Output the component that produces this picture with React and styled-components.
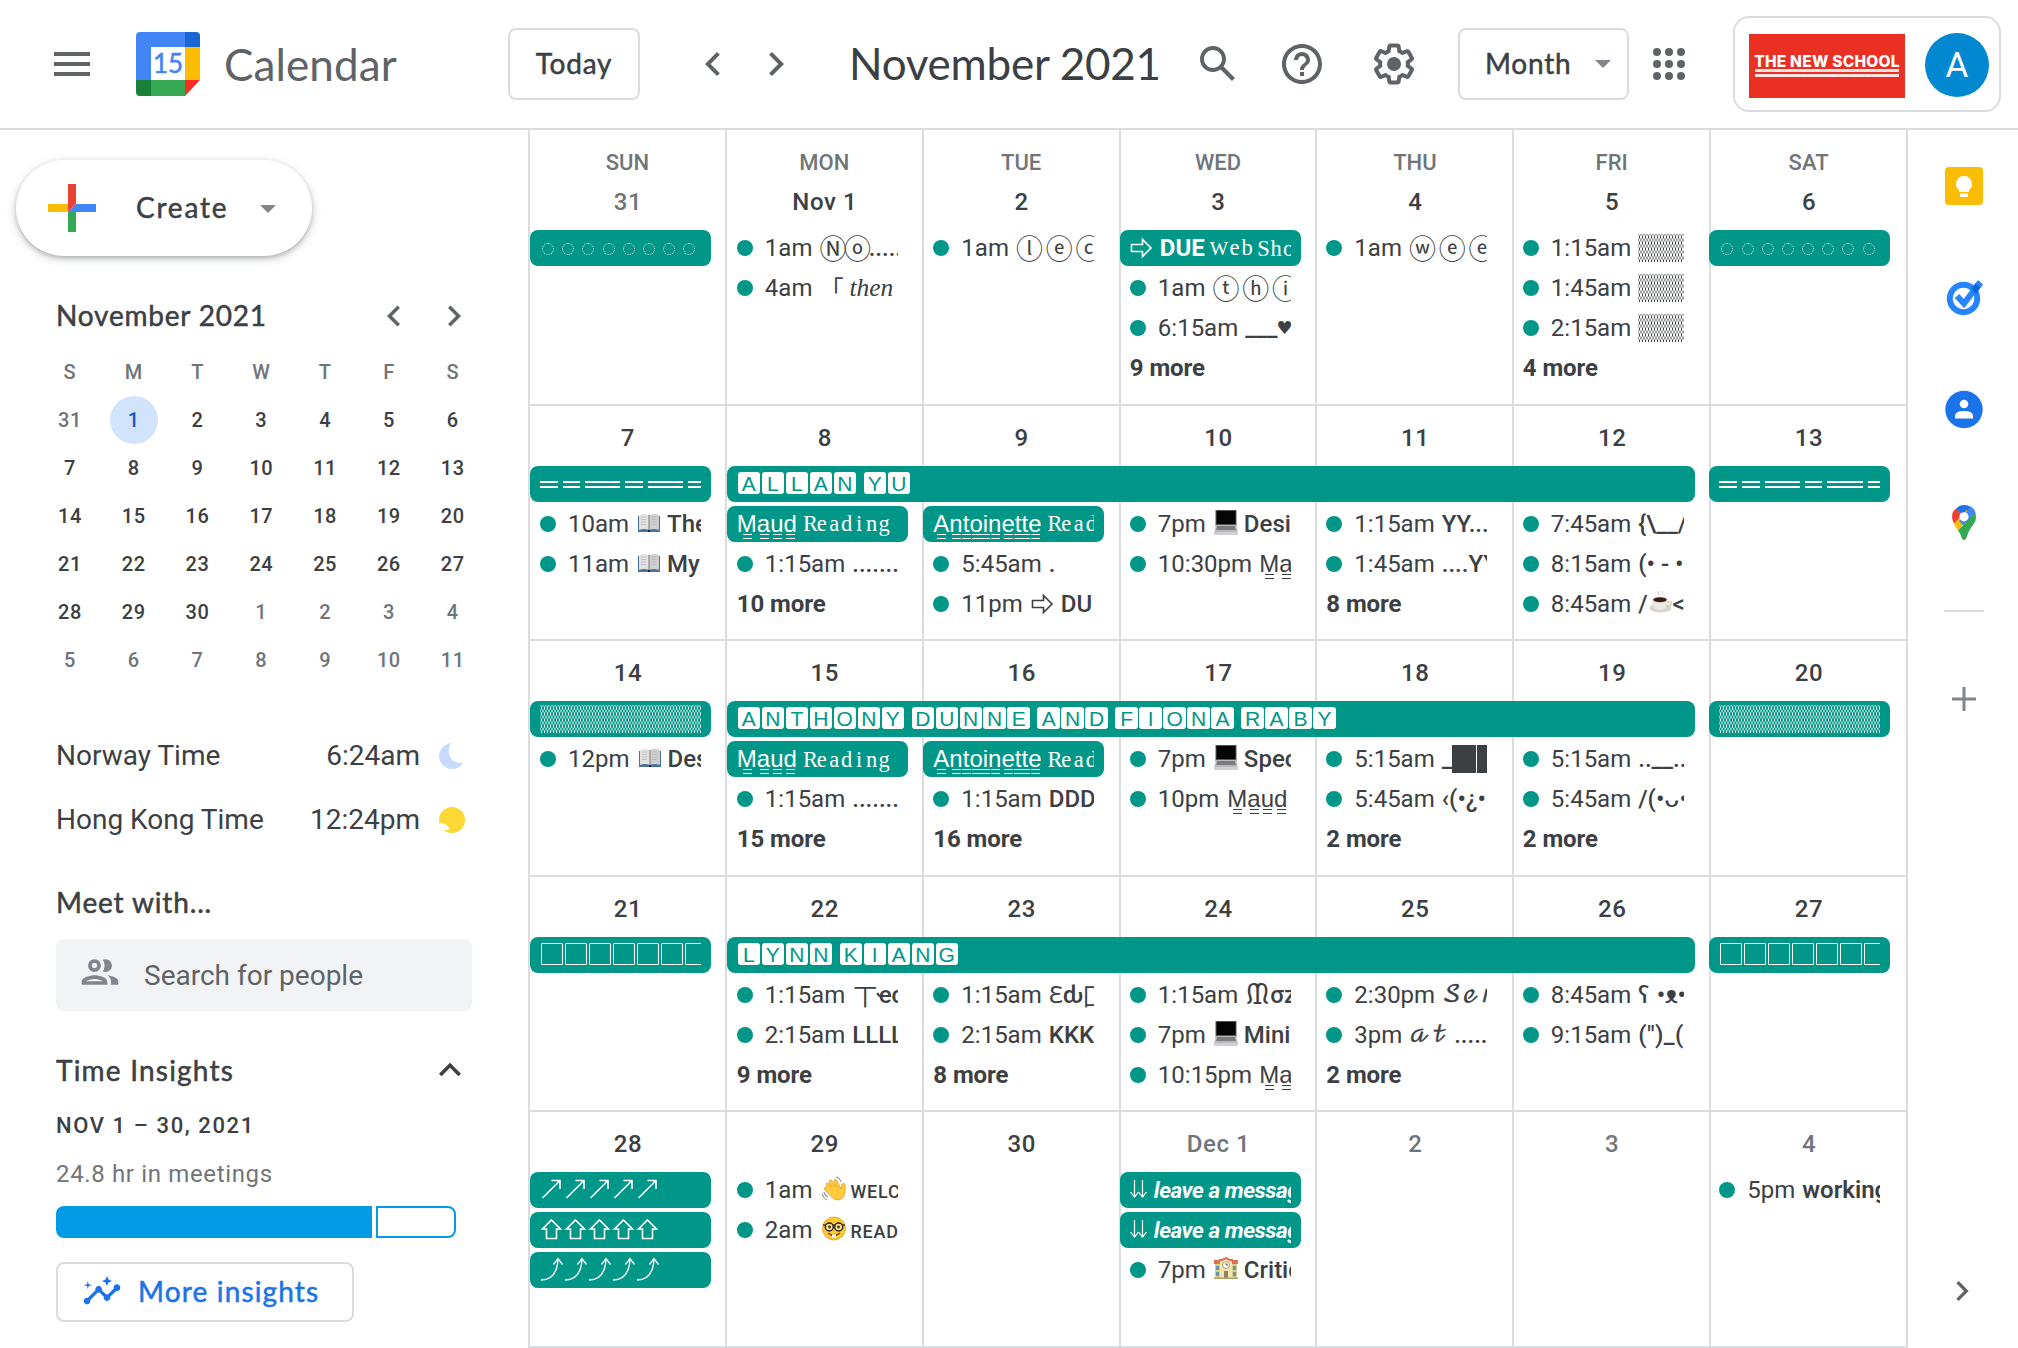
import React from "react";
import styled, { createGlobalStyle, css } from "styled-components";

const Global = createGlobalStyle`
  *, *::before, *::after { box-sizing: border-box; }
  body { margin: 0; background: #fff; overflow: hidden; }
`;

const ui = `Roboto, "Noto Sans", "DejaVu Sans", "Noto Sans CJK SC", sans-serif`;
const brand = `Lato, Roboto, sans-serif`;
const line = "#dadce0";
const ink = "#3c4043";
const grey = "#70757a";
const iconGrey = "#5f6368";
const teal = "#009688";

/* A hairline stroke brings Lato's regular cut up to label weight. */
const medium = css`
  font-weight: 400;
  -webkit-text-stroke: 0.5px currentColor;
`;

const Page = styled.div`
  width: 2018px;
  height: 1348px;
  display: flex;
  flex-direction: column;
  background: #fff;
  color: ${ink};
  font-family: ${ui};
  font-size: 24px;
  overflow: hidden;
`;

/* ---------- header ---------- */
const Header = styled.header`
  height: 130px;
  flex: none;
  display: flex;
  align-items: center;
  border-bottom: 2px solid ${line};
  padding: 0 17px 0 48px;
`;
const Icon = styled.svg`
  display: block;
  flex: none;
  width: ${(p) => p.$s || 48}px;
  height: ${(p) => p.$s || 48}px;
  margin: ${(p) => p.$m || "0"};
  fill: ${(p) => p.$c || iconGrey};
`;
const Logo = styled.svg`
  width: 64px;
  height: 64px;
  margin-left: 40px;
  flex: none;
`;
const LogoText = styled.text`
  font: 400 26px ${brand};
  fill: #4285f4;
  stroke: #4285f4;
  stroke-width: 0.5px;
`;
const AppName = styled.div`
  width: 284px;
  margin-left: 24px;
  font: 400 44px/56px ${brand};
  letter-spacing: 0.1px;
  color: ${iconGrey};
`;
const Outlined = styled.button`
  height: 72px;
  width: ${(p) => p.$w}px;
  margin-left: ${(p) => p.$ml || 0}px;
  flex: none;
  display: flex;
  align-items: center;
  justify-content: ${(p) => (p.$split ? "space-between" : "center")};
  padding: ${(p) => (p.$split ? "0 16px 2px 25px" : "0 0 2px")};
  border: 2px solid ${line};
  border-radius: 8px;
  background: #fff;
  color: ${ink};
  font: 400 28px/36px ${brand};
  letter-spacing: 0.8px;
  ${medium}
`;
const Caret = styled.span`
  flex: none;
  border: 8px solid transparent;
  border-top-color: #80868b;
  border-bottom: 0;
  margin-top: 2px;
`;
const Period = styled.h1`
  margin: 0 0 0 49px;
  width: 345px;
  flex: none;
  font: 400 44px/56px ${brand};
  letter-spacing: -0.25px;
  padding-bottom: 2px;
  white-space: nowrap;
`;
const Account = styled.div`
  width: 268px;
  height: 96px;
  margin-left: auto;
  flex: none;
  display: flex;
  align-items: center;
  justify-content: space-between;
  padding: 3px 10px 0 14px;
  border: 2px solid ${line};
  border-radius: 16px;
`;
const School = styled.div`
  width: 156px;
  height: 64px;
  padding-top: 22px;
  display: flex;
  flex-direction: column;
  align-items: center;
  background: #ea2f23;
  color: #fff;
`;
const SchoolName = styled.div`
  font: 800 15.5px/11px Inter, sans-serif;
  letter-spacing: 0.25px;
  white-space: nowrap;
`;
const SchoolRule = styled.div`
  width: 144px;
  height: 3px;
  margin-top: 2px;
  background: #fde3e1;
`;
const Avatar = styled.div`
  width: 64px;
  height: 64px;
  margin-top: -2px;
  border-radius: 50%;
  background: #0288d1;
  color: #fff;
  font: 400 35px/66px ${ui};
  text-align: center;
`;

/* ---------- sidebar ---------- */
const Body = styled.div`
  flex: 1;
  min-height: 0;
  display: flex;
`;
const Sidebar = styled.aside`
  width: 528px;
  flex: none;
  padding-top: 30px;
  display: flex;
  flex-direction: column;
  align-items: flex-start;
`;
const Create = styled.button`
  width: 296px;
  height: 96px;
  margin-left: 16px;
  padding: 0 36px 0 32px;
  display: flex;
  align-items: center;
  border: 0;
  border-radius: 48px;
  background: #fff;
  box-shadow: 0 2px 4px rgba(60, 64, 67, 0.3), 0 3px 8px 2px rgba(60, 64, 67, 0.15);
  color: ${ink};
  font: 400 28px/36px ${brand};
  letter-spacing: 1.8px;
  ${medium}
`;
const CreateLabel = styled.span`
  flex: 1;
  text-align: left;
  margin-left: 40px;
  padding-bottom: 3px;
`;
const MiniHead = styled.div`
  width: 419px;
  height: 40px;
  margin: 40px 0 0 56px;
  display: flex;
  align-items: center;
`;
const Heading = styled.div`
  flex: 1;
  font: 400 28px/36px ${brand};
  letter-spacing: ${(p) => p.$ls || 0.8}px;
  color: ${ink};
  white-space: nowrap;
  padding-bottom: ${(p) => p.$up || 0}px;
  ${medium}
`;
const MiniGrid = styled.div`
  display: grid;
  grid-template-columns: repeat(7, 63.8px);
  grid-auto-rows: 48px;
  margin: 12px 0 0 38px;
`;
const MiniCell = styled.div`
  display: flex;
  align-items: center;
  justify-content: center;
  font: 500 20px/48px ${ui};
  letter-spacing: 0.5px;
  color: ${(p) => (p.$dim ? grey : ink)};
  ${(p) =>
    p.$today &&
    css`
      color: #185abc;
      &::before {
        content: "";
        width: 48px;
        height: 48px;
        margin-right: -48px;
        border-radius: 50%;
        background: #d2e3fc;
      }
    `}
`;
const MiniNum = styled.span`
  width: 48px;
  text-align: center;
  z-index: 1;
`;
const Zone = styled.div`
  width: 409px;
  height: 64px;
  margin-left: 56px;
  display: flex;
  align-items: center;
  font: 400 28px/40px ${ui};
`;
const Zones = styled.div`
  margin-top: 40px;
`;
const ZoneTime = styled.span`
  margin-left: auto;
`;
const Meet = styled.div`
  width: 416px;
  margin: 32px 0 0 56px;
`;
const Search = styled.div`
  height: 72px;
  margin-top: 19px;
  padding: 0 22px;
  display: flex;
  align-items: center;
  border-radius: 8px;
  background: #f1f3f4;
  color: ${iconGrey};
  font: 400 28px/40px ${ui};
`;
const SearchText = styled.span`
  margin: 1px 0 0 22px;
`;
const Insights = styled.section`
  width: 416px;
  margin: 39px 0 0 56px;
`;
const InsightsHead = styled.div`
  height: 40px;
  display: flex;
  align-items: center;
`;
const Range = styled.div`
  margin-top: 20px;
  font: 500 22px/32px ${ui};
  letter-spacing: 1.6px;
`;
const Hours = styled.div`
  margin-top: 16px;
  font: 400 24px/32px ${ui};
  letter-spacing: 0.65px;
  color: ${grey};
`;
const Meter = styled.div`
  width: 400px;
  height: 32px;
  margin-top: 16px;
  display: flex;
  gap: 4px;
`;
const MeterFill = styled.div`
  width: 316px;
  border-radius: 8px 0 0 8px;
  background: #039be5;
`;
const MeterRest = styled.div`
  flex: 1;
  border: 2px solid #039be5;
  border-radius: 0 8px 8px 0;
`;
const More = styled.button`
  width: 298px;
  height: 60px;
  margin-top: 24px;
  padding: 0 24px 2px;
  display: flex;
  align-items: center;
  gap: 16px;
  border: 2px solid ${line};
  border-radius: 8px;
  background: #fff;
  color: #1a73e8;
  font: 400 28px/36px ${brand};
  letter-spacing: 1.15px;
  white-space: nowrap;
  ${medium}
`;

/* ---------- month grid ---------- */
const Month = styled.main`
  width: 1380px;
  flex: none;
  display: flex;
  flex-direction: column;
  border-left: 2px solid ${line};
`;
const DayNames = styled.div`
  height: 40px;
  flex: none;
  display: grid;
  grid-template-columns: repeat(7, minmax(0, 1fr));
`;
const DayName = styled.div`
  border-right: 2px solid ${line};
  padding-top: 21px;
  text-align: center;
  font: 500 22px/24px ${ui};
  color: ${grey};
`;
const Week = styled.div`
  flex: 1;
  min-height: 0;
  display: grid;
  grid-template-columns: repeat(7, minmax(0, 1fr));
  grid-template-rows: 60px repeat(4, 40px) minmax(0, 1fr);
`;
const Day = styled.div`
  grid-column: ${(p) => p.$c};
  grid-row: 1 / -1;
  border-right: 2px solid ${line};
  border-bottom: 2px solid ${line};
  padding: 16px 0 0 1px;
  text-align: center;
  font: 500 24px/32px ${ui};
  letter-spacing: 0.6px;
  color: ${(p) => (p.$dim ? grey : ink)};
`;
const drift = (p) => Math.max(0, p.$c - 2) * 0.36;
const slot = css`
  grid-column: ${(p) => p.$c} / span ${(p) => p.$span || 1};
  grid-row: ${(p) => p.$r};
  height: 36px;
  margin-left: -${drift}px;
  margin-right: ${(p) => 16 + drift(p)}px;
  padding: 0 10px;
  display: flex;
  align-items: center;
  font: 400 24px/36px ${ui};
  white-space: pre;
`;
const Clip = styled.div`
  flex: 1;
  min-width: 0;
  height: 36px;
  overflow: hidden;
  display: flex;
  align-items: center;
`;
const Bar = styled.div`
  ${slot}
  border-radius: 8px;
  background: ${teal};
  color: #fff;
`;
const Timed = styled.div`
  ${slot}
`;
const Dot = styled.span`
  width: 16px;
  height: 16px;
  margin-right: 12px;
  flex: none;
  border-radius: 50%;
  background: ${teal};
`;
const Time = styled.span`
  margin-right: 7px;
`;
const MoreLink = styled.div`
  ${slot}
  font-weight: 700;
  letter-spacing: -0.1px;
`;
const Title = styled.span`
  font-weight: ${(p) => p.$w || 500};
  font-size: ${(p) => p.$s || 24}px;
  letter-spacing: ${(p) => p.$ls || 0}px;
`;
const Tile = styled.span`
  width: 22.4px;
  height: 22px;
  margin: -2px 0.8px 0;
  flex: none;
  border-radius: 3px;
  background: #fff;
  color: ${teal};
  font: 400 21px/23px "Liberation Sans", sans-serif;
  text-align: center;
`;
const Gap = styled.span`
  width: ${(p) => (p.$w === undefined ? 6 : p.$w)}px;
  flex: none;
`;
const Under = styled.span`
  position: relative;
  font-family: "Liberation Sans", Arial, sans-serif;
  &::after {
    content: "";
    position: absolute;
    left: calc(50% - 4px);
    bottom: -2px;
    width: 9px;
    height: 5px;
    border: solid currentColor;
    border-width: 1.8px 0;
  }
`;
const TypeKey = styled.span`
  display: inline-block;
  width: ${(p) => (p.$wide ? 18.5 : 12.5)}px;
  font: 400 ${(p) => (p.$wide ? 19.5 : 22.5)}px/36px "Liberation Serif", serif;
  text-align: center;
`;
const Serif = styled.span`
  font: italic 400 25.5px/36px "Liberation Serif", serif;
`;
const Heart = styled.span`
  font: 400 18px/36px "DejaVu Sans", sans-serif;
  margin-left: -1px;
`;
const Cjk = styled.span`
  font: 400 ${(p) => p.$s || 24}px/36px "Noto Sans CJK JP", sans-serif;
  letter-spacing: ${(p) => p.$ls || 0}px;
  margin-left: ${(p) => p.$ml || 0}px;
`;
const Ring = styled.span`
  width: 12px;
  height: 12px;
  margin: 2px 6.2px 0 2px;
  flex: none;
  border: 1px dotted #d5eeeb;
  border-radius: 50%;
`;
const Shade = styled.span`
  height: 28px;
  width: ${(p) => p.$w}px;
  flex: none;
  color: ${(p) => p.$color || ink};
  background-image: radial-gradient(currentColor 0.55px, transparent 0.95px), radial-gradient(currentColor 0.55px, transparent 0.95px);
  background-size: 3px 6px;
  background-position: 0 0, 1.5px 3px;
`;
const Equal = styled.span`
  width: ${(p) => p.$n * 17.6}px;
  height: 7px;
  margin: 1px 5px 0 0;
  flex: none;
  border: solid #fff;
  border-width: 2px 0;
`;
const Box = styled.span`
  width: 22px;
  height: 22px;
  margin: -2px 1px 0;
  flex: none;
  border: 1px solid #fff;
  border-radius: 1px;
`;
const Small = styled.span`
  font: 500 18px/36px ${ui};
  letter-spacing: 0.8px;
  margin: 4px 0 0 -2px;
`;
const Loud = styled.span`
  font: italic 700 22.5px/36px ${ui};
  letter-spacing: -0.45px;
`;
const Script = styled.span`
  font: 400 24px/36px "DejaVu Math TeX Gyre", "DejaVu Sans", "DejaVu Serif", serif;
  letter-spacing: 1.6px;
  -webkit-text-stroke: 0.4px currentColor;
`;
const Solid = styled.span`
  width: 24px;
  height: 28px;
  flex: none;
  background: ${ink};
  margin-right: 1px;
`;
const Emoji = styled.svg`
  width: 24px;
  height: 28px;
  flex: none;
  margin: 0 ${(p) => (p.$mr === undefined ? 6 : p.$mr)}px 0 1px;
`;
const Arrow = styled.svg`
  width: ${(p) => p.$w || 24}px;
  height: 28px;
  flex: none;
  fill: none;
  stroke: currentColor;
  stroke-width: 1.6;
`;

/* ---------- right rail ---------- */
const Rail = styled.aside`
  flex: 1;
  display: flex;
  flex-direction: column;
  align-items: center;
  padding: 36px 0 36px 2px;
`;
const RailIcon = styled.svg`
  width: 40px;
  height: 40px;
  flex: none;
  margin-bottom: ${(p) => p.$mb}px;
`;
const Divider = styled.div`
  width: 40px;
  height: 2px;
  flex: none;
  background: ${line};
`;

const Left = (p) => (
  <Icon viewBox="0 0 24 24" {...p}><path d="M15.41 7.41L14 6l-6 6 6 6 1.41-1.41L10.83 12z" /></Icon>
);
const Right = (p) => (
  <Icon viewBox="0 0 24 24" {...p}><path d="M10 6L8.59 7.41 13.17 12l-4.58 4.59L10 18l6-6z" /></Icon>
);

const Book = () => (
  <Emoji viewBox="0 0 24 28">
    <path d="M1 6h22v16H1z" fill="#46719a" />
    <path d="M2 5q5-2 10 0v15q-5-2-10 0z" fill="#e4e2e0" />
    <path d="M12 5q5-2 10 0v15q-5-2-10 0z" fill="#d0cece" />
    <path d="M12 5v16" stroke="#77777c" />
    <path d="M4 7h5M4 9.500h5M4 12h5M4 14.500h5M14.500 7h5M14.500 9.500h5M14.500 12h5M14.500 14.500h5" stroke="#b4b4b8" strokeWidth=".7" />
    <path d="M11 20h2v2h-2z" fill="#222" />
  </Emoji>
);
const Laptop = () => (
  <Emoji viewBox="0 0 24 28">
    <path d="M1.500 0h21v16h-21z" fill="#555" />
    <path d="M2.500 1h19v13h-19z" fill="#050505" />
    <path d="M2 15h20l2 8H0z" fill="#b9b9bb" />
    <path d="M3 16h18l.8 4H2.200z" fill="#7c7c80" />
    <path d="M0 22h24v3H0z" fill="#d0d0d2" />
  </Emoji>
);
const Coffee = () => (
  <Emoji viewBox="0 0 24 28" $mr={0}>
    <ellipse cx="11.500" cy="18" rx="11" ry="4.500" fill="#d9d4cd" />
    <path d="M3 10q0 10 8 10t8-10z" fill="#ece8e2" />
    <path d="M18 12q5-1 4 2t-5 2" fill="none" stroke="#cfc9c0" strokeWidth="1.500" />
    <ellipse cx="11" cy="9.500" rx="8" ry="3.300" fill="#f5f2ee" />
    <ellipse cx="11" cy="9.700" rx="6.800" ry="2.500" fill="#3a1d10" />
    <path d="M10 5q-2-2 0-4M13 5q2-2 0-4" fill="none" stroke="#ccc" />
  </Emoji>
);
const Wave = () => (
  <Emoji viewBox="0 0 24 28">
    <path d="M5 11l-1-3q1-2 3 0l2 3-2-6q1-2 3 0l4 6-2-7q2-2 3 1l4 8 1-5q2-2 3 1v6q0 8-7 9-5 0-8-5l-6-6q0-2 2-1z" fill="#ffcb3d" stroke="#e59a1c" strokeWidth=".8" />
    <path d="M0 17q1 5 5 7M2 16q1 4 4 5M14 1q4 1 5 5" fill="none" stroke="#9a9a9a" strokeWidth="1.200" />
  </Emoji>
);
const Nerd = () => (
  <Emoji viewBox="0 0 24 28">
    <circle cx="12" cy="12.500" r="11.500" fill="#fcc935" stroke="#e39a20" strokeWidth=".8" />
    <path d="M1 9h22" stroke="#222" strokeWidth="1.300" />
    <circle cx="7.300" cy="11" r="4" fill="#fbe08a" stroke="#222" strokeWidth="1.400" />
    <circle cx="16.700" cy="11" r="4" fill="#fbe08a" stroke="#222" strokeWidth="1.400" />
    <circle cx="7.500" cy="11" r="1.400" fill="#4a2a10" />
    <circle cx="16.500" cy="11" r="1.400" fill="#4a2a10" />
    <path d="M6 17q6 5 12 0" fill="none" stroke="#7a3d10" strokeWidth="1.500" />
    <path d="M10 18.500h4v3h-4z" fill="#fff" />
  </Emoji>
);
const Building = () => (
  <Emoji viewBox="0 0 24 28">
    <path d="M1 8h22v14H1z" fill="#d9cd8c" />
    <path d="M0 4h7v4H0zM17 4h7v4h-7z" fill="#e0704f" />
    <path d="M6 5l6-2 6 2v17H6z" fill="#efe3b0" />
    <path d="M5 4h3l4-2 4 2h3" fill="none" stroke="#e0704f" strokeWidth="2" />
    <circle cx="12" cy="9" r="3.400" fill="#fff" stroke="#a9a06c" />
    <path d="M12 7v2h2" stroke="#333" fill="none" strokeWidth=".8" />
    <path d="M2 10h3v4H2zM2 16h3v4H2zM19 10h3v4h-3zM19 16h3v4h-3z" fill="#6c93a3" />
    <path d="M10 15h4v7h-4z" fill="#8b8468" />
    <path d="M0 21.500h24V23H0z" fill="#a9a56c" />
  </Emoji>
);
const ArrowRight = () => (
  <Arrow viewBox="0 0 24 28"><path d="M1.500 10.500h11V5.500l8.500 8.500-8.500 8.500v-5h-11z" /></Arrow>
);
const NorthEast = () => (
  <Arrow viewBox="0 0 24 28"><path d="M2.500 22L20 4.500M11.500 4.500H20V13" /></Arrow>
);
const UpHollow = () => (
  <Arrow viewBox="0 0 24 28"><path d="M11.500 4l9 9h-4v9.500h-10V13h-4z" /></Arrow>
);
const CurveUp = () => (
  <Arrow viewBox="0 0 24 28"><path d="M1 24Q17 24 18 3M13.500 8.500L18 2.500l4.500 6" strokeWidth="1.300" /></Arrow>
);
const Downs = () => (
  <Arrow viewBox="0 0 18 28" $w={18}><path d="M4.500 4v17M.5 16l4 5 4-5M12.500 4v17M8.500 16l4 5 4-5" strokeWidth="1.200" /></Arrow>
);

const Typed = ({ text }) => (
  <span>{[...text].map((ch, i) => <TypeKey key={i} $wide={ch === "W"}>{ch}</TypeKey>)}</span>
);
const Tiles = ({ text }) =>
  [...text].map((ch, i) => (ch === " " ? <Gap key={i}> </Gap> : <Tile key={i}>{ch}</Tile>));
const Underlined = ({ text }) => <span>{[...text].map((ch, i) => <Under key={i}>{ch}</Under>)}</span>;
const times = (n, el) => Array.from({ length: n }, (_, i) => React.cloneElement(el, { key: i }));
const T = (text, w) => <Title $w={w}>{text}</Title>;
const rings = times(8, <Ring />);
const equals = [1, 1, 2, 1, 2, 1].map((n, i) => <Equal key={i} $n={n} />);
const boxes = times(7, <Box />);
const shadeBar = <Shade $w={162} $color="#fff" />;
const shade = <Shade $w={60} />;
const maud = <><Underlined text="Maud" /><Gap $w={6}> </Gap><Typed text="Reading" /></>;
const antoinette = <><Underlined text="Antoinette" /><Gap $w={6}> </Gap><Typed text="Reading" /></>;
const message = <><Downs /><Gap $w={6} /><Loud>leave a message</Loud></>;

const bar = (c, r, body, span) => ({ kind: "bar", c, r, body, span });
const ev = (c, r, time, body) => ({ kind: "ev", c, r, time, body });
const more = (c, r, n) => ({ kind: "more", c, r, n });

const weeks = [
  {
    days: ["31", "Nov 1", "2", "3", "4", "5", "6"],
    dim: [0],
    items: [
      bar(1, 2, rings),
      ev(2, 2, "1am", <><Cjk $s={27} $ls={-2.4}>Ⓝⓞ</Cjk>{T("......")}</>),
      ev(2, 3, "4am", <><Cjk>「</Cjk><Gap $w={6} /><Serif>then</Serif></>),
      ev(3, 2, "1am", <Cjk $s={27} $ls={2.8}>ⓛⓔⓒ</Cjk>),
      bar(4, 2, <><ArrowRight /><Gap $w={6} />{T("DUE", 700)}<Gap $w={5} /><Typed text="Web" /><Gap $w={4} /><Typed text="Show" /></>),
      ev(4, 3, "1am", <Cjk $s={27} $ls={2.8}>ⓣⓗⓘ</Cjk>),
      ev(4, 4, "6:15am", <>{T("___")}<Heart>♥</Heart></>),
      more(4, 5, 9),
      ev(5, 2, "1am", <Cjk $s={27} $ls={2.8}>ⓦⓔⓔ</Cjk>),
      ev(6, 2, "1:15am", shade),
      ev(6, 3, "1:45am", shade),
      ev(6, 4, "2:15am", shade),
      more(6, 5, 4),
      bar(7, 2, rings),
    ],
  },
  {
    days: ["7", "8", "9", "10", "11", "12", "13"],
    items: [
      bar(1, 2, equals),
      ev(1, 3, "10am", <><Book />{T("The")}</>),
      ev(1, 4, "11am", <><Book />{T("My")}</>),
      bar(2, 2, <Tiles text="ALLAN YU" />, 5),
      bar(2, 3, maud),
      ev(2, 4, "1:15am", T("........")),
      more(2, 5, 10),
      bar(3, 3, antoinette),
      ev(3, 4, "5:45am", T(".")),
      ev(3, 5, "11pm", <><Gap $w={1} /><ArrowRight /><Gap $w={6} />{T("DU")}</>),
      ev(4, 3, "7pm", <><Laptop />{T("Design")}</>),
      ev(4, 4, "10:30pm", <Underlined text="Maud" />),
      ev(5, 3, "1:15am", T("YY....")),
      ev(5, 4, "1:45am", T("....YY")),
      more(5, 5, 8),
      ev(6, 3, "7:45am", T("{\\__/}")),
      ev(6, 4, "8:15am", T("(• - •)")),
      ev(6, 5, "8:45am", <>{T("/")}<Coffee />{T("<")}</>),
      bar(7, 2, equals),
    ],
  },
  {
    days: ["14", "15", "16", "17", "18", "19", "20"],
    items: [
      bar(1, 2, shadeBar),
      ev(1, 3, "12pm", <><Book />{T("Design")}</>),
      bar(2, 2, <Tiles text="ANTHONY DUNNE AND FIONA RABY" />, 5),
      bar(2, 3, maud),
      ev(2, 4, "1:15am", T("........")),
      more(2, 5, 15),
      bar(3, 3, antoinette),
      ev(3, 4, "1:15am", T("DDDD")),
      more(3, 5, 16),
      ev(4, 3, "7pm", <><Laptop />{T("Speculative")}</>),
      ev(4, 4, "10pm", <><Gap $w={1} /><Underlined text="Maud" /></>),
      ev(5, 3, "5:15am", <>{T("_")}<Solid /><Solid /></>),
      ev(5, 4, "5:45am", T("‹(•¿•")),
      more(5, 5, 2),
      ev(6, 3, "5:15am", T("..__...")),
      ev(6, 4, "5:45am", T("/(•ᴗ•)")),
      more(6, 5, 2),
      bar(7, 2, shadeBar),
    ],
  },
  {
    days: ["21", "22", "23", "24", "25", "26", "27"],
    items: [
      bar(1, 2, boxes),
      bar(2, 2, <Tiles text="LYNN KIANG" />, 5),
      ev(2, 3, "1:15am", <><Cjk $ml={1}>丅</Cjk>{T("ҽcհ")}</>),
      ev(2, 4, "2:15am", T("LLLLL")),
      more(2, 5, 9),
      ev(3, 3, "1:15am", <>{T("Ɛ", 400)}{T("ԃ")}<Cjk $ml={-1}>匚</Cjk></>),
      ev(3, 4, "2:15am", T("KKKK")),
      more(3, 5, 8),
      ev(4, 3, "1:15am", <><Gap $w={1} /><Title $w={400} $s={28} $ls={1}>ᙢ</Title>{T("σz")}</>),
      ev(4, 4, "7pm", <><Laptop />{T("Mini")}</>),
      ev(4, 5, "10:15pm", <Underlined text="Maud" />),
      ev(5, 3, "2:30pm", <Script>𝒮ℯ𝓇</Script>),
      ev(5, 4, "3pm", <><Script>𝒶𝓉</Script><Gap $w={5} />{T("......")}</>),
      more(5, 5, 2),
      ev(6, 3, "8:45am", <>{T("ʕ")}<Gap $w={2} />{T(" •ᴥ•")}</>),
      ev(6, 4, "9:15am", <Title $ls={0.4}>{'(")_('}</Title>),
      bar(7, 2, boxes),
    ],
  },
  {
    days: ["28", "29", "30", "Dec 1", "2", "3", "4"],
    dim: [3, 4, 5, 6],
    items: [
      bar(1, 2, times(5, <NorthEast />)),
      bar(1, 3, times(5, <UpHollow />)),
      bar(1, 4, times(5, <CurveUp />)),
      ev(2, 2, "1am", <><Gap $w={2} /><Wave /><Small>WELCOME</Small></>),
      ev(2, 3, "2am", <><Gap $w={2} /><Nerd /><Small>READING</Small></>),
      bar(4, 2, message),
      bar(4, 3, message),
      ev(4, 4, "7pm", <><Building />{T("Critique")}</>),
      ev(7, 2, "5pm", T("working", 600)),
    ],
  },
];

const mini = [
  [31, 1, 2, 3, 4, 5, 6],
  [7, 8, 9, 10, 11, 12, 13],
  [14, 15, 16, 17, 18, 19, 20],
  [21, 22, 23, 24, 25, 26, 27],
  [28, 29, 30, 1, 2, 3, 4],
  [5, 6, 7, 8, 9, 10, 11],
];

function Item({ it }) {
  if (it.kind === "more") return <MoreLink $c={it.c} $r={it.r}>{it.n} more</MoreLink>;
  if (it.kind === "bar")
    return <Bar $c={it.c} $r={it.r} $span={it.span}><Clip>{it.body}</Clip></Bar>;
  return (
    <Timed $c={it.c} $r={it.r}>
      <Clip><Dot /><Time>{it.time}</Time>{it.body}</Clip>
    </Timed>
  );
}

export default function App() {
  return (
    <Page>
      <Global />
      <Header>
        <Icon viewBox="0 0 24 24"><path d="M3 18h18v-2H3v2zm0-5h18v-2H3v2zm0-7v2h18V6H3z" /></Icon>
        <Logo viewBox="0 0 64 64">
          <path d="M15 15h34v33H15z" fill="#fff" />
          <path d="M4 0h45v15H15v33H0V4q0-4 4-4z" fill="#4285f4" />
          <path d="M49 0h11q4 0 4 4v11H49z" fill="#1967d2" />
          <path d="M49 15h15v33H49z" fill="#fbbc04" />
          <path d="M15 48h34v16H15z" fill="#34a853" />
          <path d="M0 48h15v16H4q-4 0-4-4z" fill="#188038" />
          <path d="M49 48h15L49 64z" fill="#ff2c25" />
          <LogoText x="32" y="41" textAnchor="middle">15</LogoText>
        </Logo>
        <AppName>Calendar</AppName>
        <Outlined $w={132}>Today</Outlined>
        <Left $m="0 0 0 49px" />
        <Right $m="0 0 0 15px" />
        <Period>November 2021</Period>
        <Icon viewBox="0 0 24 24"><path d="M20.490 19l-5.730-5.730C15.530 12.200 16 10.910 16 9.500 16 5.910 13.090 3 9.500 3S3 5.910 3 9.500 5.910 16 9.500 16c1.410 0 2.700-.47 3.770-1.240L19 20.490 20.490 19zM5 9.500C5 7.010 7.010 5 9.500 5S14 7.010 14 9.500 11.990 14 9.500 14 5 11.990 5 9.500z" /></Icon>
        <Icon viewBox="0 0 24 24" $m="0 0 0 36px"><path d="M11 18h2v-2h-2v2zm1-16C6.480 2 2 6.480 2 12s4.480 10 10 10 10-4.480 10-10S17.520 2 12 2zm0 18c-4.410 0-8-3.590-8-8s3.590-8 8-8 8 3.590 8 8-3.590 8-8 8zm0-14c-2.210 0-4 1.790-4 4h2c0-1.100.9-2 2-2s2 .9 2 2c0 2-3 1.750-3 5h2c0-2.250 3-2.500 3-5 0-2.210-1.790-4-4-4z" /></Icon>
        <Icon viewBox="0 0 24 24" $m="0 0 0 44px">
          <path d="M13.850 22.250h-3.700c-.74 0-1.360-.54-1.450-1.270l-.27-1.890c-.27-.14-.53-.29-.79-.46l-1.800.72c-.7.26-1.470-.03-1.810-.65L2.200 15.530c-.35-.66-.2-1.440.36-1.880l1.530-1.190c-.01-.15-.02-.3-.02-.46 0-.15.01-.31.02-.46l-1.520-1.190c-.59-.45-.74-1.260-.37-1.880l1.850-3.190c.34-.62 1.110-.9 1.790-.63l1.810.73c.26-.17.52-.32.78-.46l.27-1.910c.09-.7.71-1.250 1.440-1.250h3.700c.74 0 1.360.54 1.450 1.270l.27 1.890c.27.14.53.29.79.46l1.800-.72c.71-.26 1.480.03 1.820.65l1.840 3.180c.36.66.2 1.440-.36 1.880l-1.520 1.190c.01.15.02.3.02.46s-.01.31-.02.46l1.520 1.190c.56.45.72 1.230.37 1.860l-1.860 3.220c-.34.62-1.110.9-1.800.63l-1.800-.72c-.26.17-.52.32-.78.46l-.27 1.910c-.1.68-.72 1.220-1.460 1.220zm-3.230-2h2.760l.37-2.550.53-.22c.44-.18.88-.44 1.340-.78l.45-.34 2.380.96 1.380-2.400-2.030-1.580.07-.56c.03-.26.06-.51.06-.78s-.03-.53-.06-.78l-.07-.56 2.030-1.580-1.390-2.400-2.390.96-.45-.35c-.42-.32-.87-.58-1.330-.77l-.52-.22-.37-2.550h-2.760l-.37 2.550-.53.210c-.44.190-.88.440-1.340.790l-.45.330-2.380-.95-1.390 2.390 2.030 1.580-.07.560a7 7 0 0 0-.06.790c0 .260.020.530.060.780l.070.560-2.030 1.580 1.380 2.400 2.390-.960.450.350c.430.330.860.580 1.330.770l.530.220.38 2.550z" />
          <circle cx="12" cy="12" r="3.500" />
        </Icon>
        <Outlined $w={171} $ml={40} $split>Month<Caret /></Outlined>
        <Icon viewBox="0 0 48 48" $m="0 0 0 16px">
          {[12, 24, 36].map((y) => [12, 24, 36].map((x) => <circle key={`${x}-${y}`} cx={x} cy={y} r="4" />))}
        </Icon>
        <Account>
          <School><SchoolName>THE NEW SCHOOL</SchoolName><SchoolRule /><SchoolRule /></School>
          <Avatar>A</Avatar>
        </Account>
      </Header>
      <Body>
        <Sidebar>
          <Create>
            <Icon viewBox="0 0 48 48">
              <path d="M20 0h8v20l-8 8z" fill="#ea4335" />
              <path d="M0 20h20v8H0z" fill="#fbbc04" />
              <path d="M28 20h20v8H20z" fill="#4285f4" />
              <path d="M20 28h8v20h-8z" fill="#34a853" />
            </Icon>
            <CreateLabel>Create</CreateLabel>
            <Caret />
          </Create>
          <MiniHead>
            <Heading $ls={0.8} $up={3}>November 2021</Heading>
            <Left $s={42} />
            <Right $s={42} $m="0 0 0 18px" />
          </MiniHead>
          <MiniGrid>
            {[..."SMTWTFS"].map((d, i) => <MiniCell key={d + i} $dim>{d}</MiniCell>)}
            {mini.map((row, r) =>
              row.map((n, c) => (
                <MiniCell key={`${r}-${c}`} $today={r === 0 && c === 1} $dim={(r === 0 && c === 0) || (r === 4 && c > 2) || r === 5}>
                  <MiniNum>{n}</MiniNum>
                </MiniCell>
              ))
            )}
          </MiniGrid>
          <Zones>
            <Zone>
              Norway Time<ZoneTime>6:24am</ZoneTime>
              <Icon viewBox="0 0 26 26" $s={26} $m="0 0 0 19px" $c="#c9dbfd"><path d="M12 0A13 13 0 1 0 24 20Q12 20 10 11 9 5 12 0z" /></Icon>
            </Zone>
            <Zone>
              Hong Kong Time<ZoneTime>12:24pm</ZoneTime>
              <Icon viewBox="0 0 26 26" $s={26} $m="0 0 0 19px" $c="#fdd835">
                <circle cx="13" cy="13" r="13" />
                <path d="M0 17q2-2 4 0 3-1 4 2 3 1 2 4H0z" fill="#fff" />
              </Icon>
            </Zone>
          </Zones>
          <Meet>
            <Heading $ls={0.85}>Meet with...</Heading>
            <Search>
              <Icon viewBox="0 0 24 24" $s={44} $c="#80868b" $m="-6px 0 0">
                <path d="M9 12c1.930 0 3.500-1.570 3.500-3.500S10.930 5 9 5 5.500 6.570 5.500 8.500 7.070 12 9 12zm0-5c.83 0 1.500.67 1.500 1.500S9.830 10 9 10s-1.500-.67-1.500-1.500S8.170 7 9 7zm0 6.750c-2.340 0-7 1.170-7 3.500V19h14v-1.750c0-2.330-4.660-3.500-7-3.500zM4.340 17c.84-.58 2.870-1.250 4.660-1.250s3.820.67 4.660 1.250H4.340zm11.700-3.190c1.160.84 1.960 1.960 1.960 3.440V19h4v-1.750c0-2.020-3.500-3.170-5.960-3.440zM15 12c1.930 0 3.500-1.570 3.500-3.500S16.930 5 15 5c-.54 0-1.040.130-1.500.350.630.890 1 1.980 1 3.150s-.37 2.260-1 3.150c.46.220.96.350 1.500.350z" />
              </Icon>
              <SearchText>Search for people</SearchText>
            </Search>
          </Meet>
          <Insights>
            <InsightsHead>
              <Heading $ls={1.2}>Time Insights</Heading>
              <Icon viewBox="0 0 24 24" $s={44} $c={ink}><path d="M12 8l-6 6 1.410 1.410L12 10.830l4.590 4.580L18 14z" /></Icon>
            </InsightsHead>
            <Range>NOV 1 – 30, 2021</Range>
            <Hours>24.8 hr in meetings</Hours>
            <Meter><MeterFill /><MeterRest /></Meter>
            <More>
              <Icon viewBox="0 0 24 24" $s={40} $c="#1a73e8">
                <path d="M21 8c-1.450 0-2.260 1.440-1.930 2.510l-3.550 3.560c-.3-.09-.74-.09-1.040 0l-2.550-2.550C12.270 10.450 11.460 9 10 9c-1.450 0-2.270 1.440-1.930 2.520l-4.560 4.550C2.440 15.740 1 16.550 1 18c0 1.100.9 2 2 2 1.450 0 2.260-1.440 1.930-2.510l4.550-4.560c.3.09.74.09 1.040 0l2.550 2.550C12.730 16.550 13.540 18 15 18c1.450 0 2.270-1.440 1.930-2.520l3.560-3.550C21.560 12.260 23 11.450 23 10c0-1.100-.9-2-2-2z" />
                <path d="M15 9l.94-2.070L18 6l-2.060-.93L15 3l-.92 2.070L12 6l2.080.93zM3.500 11L4 9l2-.5L4 8l-.5-2L3 8l-2 .5L3 9z" />
              </Icon>
              More insights
            </More>
          </Insights>
        </Sidebar>
        <Month>
          <DayNames>
            {["SUN", "MON", "TUE", "WED", "THU", "FRI", "SAT"].map((d) => <DayName key={d}>{d}</DayName>)}
          </DayNames>
          {weeks.map((w, i) => (
            <Week key={i}>
              {w.days.map((d, c) => <Day key={d} $c={c + 1} $dim={(w.dim || []).includes(c)}>{d}</Day>)}
              {w.items.map((it, k) => <Item key={k} it={it} />)}
            </Week>
          ))}
        </Month>
        <Rail>
          <RailIcon viewBox="0 0 40 40" $mb={72}>
            <rect x="1" y="1" width="38" height="38" rx="4" fill="#fbbc04" />
            <path d="M20 10a8 8 0 0 0-5 14.200V26h10v-1.800A8 8 0 0 0 20 10zM16 27.500h8V31h-8z" fill="#fff" />
          </RailIcon>
          <RailIcon viewBox="0 0 40 40" $mb={72}>
            <circle cx="19.500" cy="20.500" r="13.700" fill="none" stroke="#2684fc" strokeWidth="6" />
            <path d="M13 18l7 7.500L35 5.500" fill="none" stroke="#2684fc" strokeWidth="6" />
            <path d="M27.500 11l4.500-6 5 4-5 7z" fill="#0066da" />
            <path d="M34 2l5 4.500-2.500 3.500-5-4z" fill="#2684fc" />
          </RailIcon>
          <RailIcon viewBox="0 0 40 40" $mb={72}>
            <circle cx="20" cy="19.500" r="18.700" fill="#1a73e8" />
            <circle cx="20" cy="14" r="4.300" fill="#fff" />
            <path d="M11 28.500V26q0-5 9-5t9 5v2.500z" fill="#fff" />
          </RailIcon>
          <RailIcon viewBox="0 0 40 40" $mb={68}>
            <path d="M20 3q4 0 7 2l-7 9-8-7q3-4 8-4z" fill="#1a73e8" />
            <path d="M12 6.500l8 8-10 7q-2-4-2-7 0-5 4-8z" fill="#ea4335" />
            <path d="M10 21.500l13-14 2 8-11 13q-3-4-4-7z" fill="#fbbc04" />
            <path d="M26.500 4.500q4 2 5 6L20 24l-5-5z" fill="#4285f4" />
            <path d="M31.300 10.500q2 6-1.300 11-6 8-7.500 14-.8 2.500-2.500 2.500t-2.500-2.500q-1-4-3.500-7z" fill="#34a853" />
            <circle cx="20" cy="14.800" r="4.600" fill="#fff" />
          </RailIcon>
          <Divider />
          <Icon viewBox="0 0 40 40" $s={40} $c="#80868b" $m="67px 0 0"><path d="M18.500 8h3v10.500H32v3H21.500V32h-3V21.500H8v-3h10.500z" /></Icon>
          <Right $s={40} $m="auto 4px 1px 0" />
        </Rail>
      </Body>
    </Page>
  );
}
